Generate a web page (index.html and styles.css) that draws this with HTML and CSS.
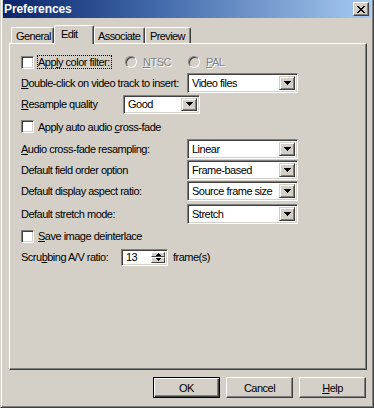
FILE: index.html
```html
<!DOCTYPE html>
<html lang="en">
<head>
    <meta charset="UTF-8">
    <title>Preferences</title>
    <link rel="stylesheet" href="styles.css">
</head>
<body>
    <div class="window">
        <div class="titlebar">
            <span class="title">Preferences</span>
            <span class="close-btn">
                <svg width="8" height="7" viewBox="0 0 8 7"><path d="M0 0h2v1H0z M6 0h2v1H6z M1 1h2v1H1z M5 1h2v1H5z M2 2h4v1H2z M3 3h2v1H3z M2 4h4v1H2z M1 5h2v1H1z M5 5h2v1H5z M0 6h2v1H0z M6 6h2v1H6z" fill="#000"/></svg>
            </span>
        </div>

        <div class="tabs">
            <div class="tab tab-general">General</div>
            <div class="tab tab-edit active">Edit</div>
            <div class="tab tab-assoc">Associate</div>
            <div class="tab tab-preview">Preview</div>
        </div>

        <div class="panel">
            <!-- colour filter -->
            <div class="row">
                <div class="check-group filter-group">
                    <span class="checkbox"></span>
                    <span class="focus">App<u>l</u>y color filter:</span>
                </div>
                <div class="radio-group ntsc">
                    <span class="radio"></span>
                    <span class="disabled"><u>N</u>TSC</span>
                </div>
                <div class="radio-group">
                    <span class="radio"></span>
                    <span class="disabled"><u>P</u>AL</span>
                </div>
            </div>

            <div class="row">
                <span class="label label-wide"><u>D</u>ouble-click on video track to insert:</span>
                <div class="select"><span class="value">Video files</span><span class="drop"><svg width="7" height="4" viewBox="0 0 7 4"><path d="M0 0h7v1H0z M1 1h5v1H1z M2 2h3v1H2z M3 3h1v1H3z" fill="#000"/></svg></span></div>
            </div>

            <div class="row">
                <span class="label label-short"><u>R</u>esample quality</span>
                <div class="select select-small"><span class="value">Good</span><span class="drop"><svg width="7" height="4" viewBox="0 0 7 4"><path d="M0 0h7v1H0z M1 1h5v1H1z M2 2h3v1H2z M3 3h1v1H3z" fill="#000"/></svg></span></div>
            </div>

            <div class="row">
                <div class="check-group">
                    <span class="checkbox"></span>
                    <span>Apply auto audio <u>c</u>ross-fade</span>
                </div>
            </div>

            <div class="row">
                <span class="label label-wide"><u>A</u>udio cross-fade resampling:</span>
                <div class="select"><span class="value">Linear</span><span class="drop"><svg width="7" height="4" viewBox="0 0 7 4"><path d="M0 0h7v1H0z M1 1h5v1H1z M2 2h3v1H2z M3 3h1v1H3z" fill="#000"/></svg></span></div>
            </div>

            <div class="row">
                <span class="label label-wide">Default field order option</span>
                <div class="select"><span class="value">Frame-based</span><span class="drop"><svg width="7" height="4" viewBox="0 0 7 4"><path d="M0 0h7v1H0z M1 1h5v1H1z M2 2h3v1H2z M3 3h1v1H3z" fill="#000"/></svg></span></div>
            </div>

            <div class="row">
                <span class="label label-wide">Default display aspect ratio:</span>
                <div class="select"><span class="value">Source frame size</span><span class="drop"><svg width="7" height="4" viewBox="0 0 7 4"><path d="M0 0h7v1H0z M1 1h5v1H1z M2 2h3v1H2z M3 3h1v1H3z" fill="#000"/></svg></span></div>
            </div>

            <div class="row">
                <span class="label label-wide">Default stretch mode:</span>
                <div class="select"><span class="value">Stretch</span><span class="drop"><svg width="7" height="4" viewBox="0 0 7 4"><path d="M0 0h7v1H0z M1 1h5v1H1z M2 2h3v1H2z M3 3h1v1H3z" fill="#000"/></svg></span></div>
            </div>

            <div class="row">
                <div class="check-group">
                    <span class="checkbox"></span>
                    <span><u>S</u>ave image deinterlace</span>
                </div>
            </div>

            <div class="row">
                <span class="label label-spin">Scru<u>b</u>bing A/V ratio:</span>
                <div class="spin">
                    <span class="value">13</span>
                    <span class="spin-btns">
                        <span class="spin-btn"><svg width="5" height="3" viewBox="0 0 5 3"><path d="M2 0h1v1H2z M1 1h3v1H1z M0 2h5v1H0z" fill="#000"/></svg></span>
                        <span class="spin-btn"><svg width="5" height="3" viewBox="0 0 5 3"><path d="M0 0h5v1H0z M1 1h3v1H1z M2 2h1v1H2z" fill="#000"/></svg></span>
                    </span>
                </div>
                <span class="unit">frame(s)</span>
            </div>
        </div>

        <div class="buttons">
            <div class="btn btn-default">OK</div>
            <div class="btn">Cancel</div>
            <div class="btn"><u>H</u>elp</div>
        </div>
    </div>
</body>
</html>
```

FILE: styles.css
```css
body {
    margin: 0;
    background-color: #d4d0c8;
    font-family: "Liberation Sans", Arial, sans-serif;
    font-size: 11px;
    letter-spacing: -0.5px;
    color: #000;
}

u {
    text-decoration: underline;
    text-underline-offset: 1px;
}

svg {
    display: block;
    shape-rendering: crispEdges;
}

.window {
    width: 374px;
    height: 408px;
    box-sizing: border-box;
    background-color: #d4d0c8;
    border-left: 1px solid #d4d0c8;
    border-right: 1px solid #404040;
    border-bottom: 1px solid #404040;
    box-shadow: inset 1px 0 #fff, inset -1px -1px #808080;
    padding: 0 2px 2px 2px;
    display: flex;
    flex-direction: column;
}

/* title bar */
.titlebar {
    height: 18px;
    background: linear-gradient(to right, #0a246a 0%, #3f67a8 40%, #a6caf0 100%);
    display: flex;
    align-items: center;
    justify-content: space-between;
    padding: 0 2px 0 1px;
}

.title {
    color: #fff;
    font-weight: bold;
    font-size: 12px;
    letter-spacing: -0.1px;
}

.close-btn {
    width: 16px;
    height: 14px;
    box-sizing: border-box;
    background-color: #d4d0c8;
    border: 1px solid;
    border-color: #fff #404040 #404040 #fff;
    box-shadow: inset -1px -1px #808080;
    display: flex;
    align-items: center;
    justify-content: center;
    padding-right: 1px;
}

/* tabs */
.tabs {
    display: flex;
    align-items: flex-end;
    height: 18px;
    margin-top: 7px;
    padding-left: 8px;
}

.tab {
    height: 16px;
    box-sizing: border-box;
    border-top: 1px solid #fff;
    border-left: 1px solid #fff;
    border-right: 1px solid #404040;
    box-shadow: inset -1px 0 #808080;
    border-top-left-radius: 2px;
    border-top-right-radius: 2px;
    padding: 2px 0 0 4px;
    line-height: 13px;
    white-space: nowrap;
    letter-spacing: -0.6px;
}

.tab-general { width: 43px; }
.tab-edit { width: 40px; }
.tab-assoc { width: 51px; padding-left: 3px; }
.tab-preview { width: 46px; }

.tab.active {
    height: 19px;
    margin-bottom: -1px;
    position: relative;
    z-index: 1;
    background-color: #d4d0c8;
    padding-top: 2px;
    padding-left: 6px;
}

/* panel */
.panel {
    margin: 0 4px 0 6px;
    height: 327px;
    box-sizing: border-box;
    border-top: 1px solid #fff;
    border-left: 1px solid #fff;
    border-right: 1px solid #404040;
    border-bottom: 1px solid #404040;
    box-shadow: inset -1px -1px #808080;
    padding: 8px 0 0 11px;
    display: grid;
    grid-template-rows: 20px 21px 22px 23px 21px 21px 22px 23px 22px 20px;
    align-content: start;
}

.row {
    display: flex;
    align-items: center;
}

.label-wide { width: 166px; }
.label-short { width: 102px; }
.label-spin { width: 100px; }

.check-group,
.radio-group {
    display: flex;
    align-items: center;
    gap: 4px;
}

.filter-group { width: 104px; }
.ntsc { width: 63px; }

.checkbox {
    width: 13px;
    height: 13px;
    box-sizing: border-box;
    background-color: #fff;
    border: 1px solid;
    border-color: #808080 #fff #fff #808080;
    box-shadow: inset 1px 1px #404040, inset -1px -1px #d4d0c8;
}

.focus {
    outline: 1px dotted #000;
    outline-offset: 0;
    padding: 0 1px 0 0;
    line-height: 12px;
}

.radio {
    width: 12px;
    height: 12px;
    box-sizing: border-box;
    border-radius: 50%;
    background-color: #d4d0c8;
    border: 1px solid;
    border-color: #808080 #fff #fff #808080;
    box-shadow: inset 1px 1px #404040;
    margin-right: 2px;
}

.disabled {
    color: #808080;
    text-shadow: 1px 1px #fff;
}

/* combo boxes */
.select {
    width: 111px;
    height: 20px;
    box-sizing: border-box;
    background-color: #fff;
    border: 1px solid;
    border-color: #808080 #fff #fff #808080;
    box-shadow: inset 1px 1px #404040, inset -1px -1px #d4d0c8;
    display: flex;
    align-items: center;
    justify-content: space-between;
    padding: 2px;
}

.select-small {
    width: 77px;
    height: 19px;
}

.value {
    padding-left: 2px;
}

.drop {
    width: 16px;
    height: 100%;
    box-sizing: border-box;
    background-color: #d4d0c8;
    border: 1px solid;
    border-color: #d4d0c8 #404040 #404040 #d4d0c8;
    box-shadow: inset 1px 1px #fff, inset -1px -1px #808080;
    display: flex;
    align-items: center;
    justify-content: center;
}

/* spin edit */
.spin {
    width: 47px;
    height: 17px;
    box-sizing: border-box;
    background-color: #fff;
    border: 1px solid;
    border-color: #808080 #fff #fff #808080;
    box-shadow: inset 1px 1px #404040, inset -1px -1px #d4d0c8;
    display: flex;
    align-items: center;
    justify-content: space-between;
    padding: 2px;
}

.spin-btns {
    display: flex;
    flex-direction: column;
    width: 14px;
    height: 100%;
}

.spin-btn {
    flex: 1;
    background-color: #d4d0c8;
    border: 1px solid;
    border-color: #fff #404040 #404040 #fff;
    display: flex;
    align-items: center;
    justify-content: center;
}

.unit {
    margin-left: 5px;
}

/* dialog buttons */
.buttons {
    display: flex;
    justify-content: flex-end;
    gap: 6px;
    padding: 7px 5px 0 0;
}

.btn {
    width: 67px;
    height: 21px;
    box-sizing: border-box;
    border: 1px solid;
    border-color: #fff #404040 #404040 #fff;
    box-shadow: inset -1px -1px #808080;
    display: flex;
    align-items: center;
    justify-content: center;
}

.btn-default {
    border: 1px solid #000;
    box-shadow: inset 1px 1px #fff, inset -1px -1px #404040, inset -2px -2px #808080;
}
```
